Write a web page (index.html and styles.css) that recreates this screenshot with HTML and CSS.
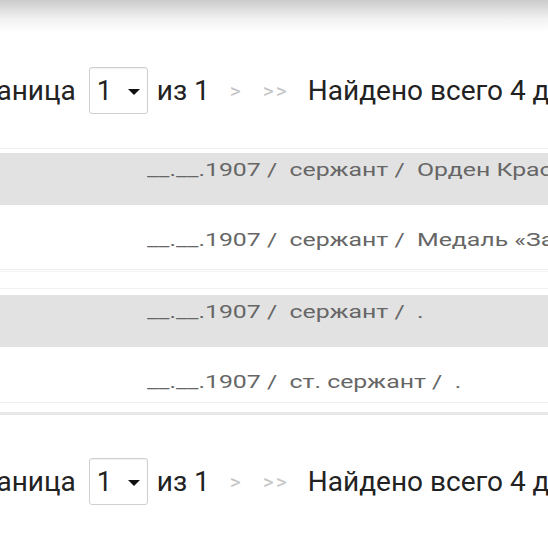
FILE: index.html
```html
<!DOCTYPE html>
<html lang="ru">
<head>
<meta charset="utf-8">
<link rel="stylesheet" href="styles.css">
</head>
<body>
<div class="shade"></div>
<div class="pager pager-top">
  <span class="label">Страница</span>
  <span class="select"><span class="val">1</span><span class="caret"></span></span>
  <span class="of">из 1</span>
  <span class="nav nav-next">&gt;</span>
  <span class="nav nav-last">&gt;&gt;</span>
  <span class="found">Найдено всего 4 документа</span>
</div>
<div class="list">
  <div class="row row-gray row-first"><div class="band"><span class="txt">__.__.1907 /&nbsp; сержант /&nbsp; Орден Красной Звезды</span></div></div>
  <div class="row row-white row-second"><div class="band"><span class="txt">__.__.1907 /&nbsp; сержант /&nbsp; Медаль «За отвагу»</span></div></div>
  <div class="row row-gray row-third"><div class="band"><span class="txt">__.__.1907 /&nbsp; сержант /&nbsp; .</span></div></div>
  <div class="row row-white row-fourth"><div class="band"><span class="txt">__.__.1907 /&nbsp; ст. сержант /&nbsp; .</span></div></div>
</div>
<div class="pager pager-bottom">
  <span class="label">Страница</span>
  <span class="select"><span class="val">1</span><span class="caret"></span></span>
  <span class="of">из 1</span>
  <span class="nav nav-next">&gt;</span>
  <span class="nav nav-last">&gt;&gt;</span>
  <span class="found">Найдено всего 4 документа</span>
</div>
</body>
</html>
```
FILE: styles.css
```css
html, body {
  margin: 0;
  padding: 0;
  background: #fff;
}
body {
  width: 548px;
  height: 548px;
  overflow: hidden;
  font-family: Roboto, "Liberation Sans", sans-serif;
}
.shade {
  height: 32px;
  background: linear-gradient(#cbcbcb, #f2f2f2 60%, #fff);
}
.pager {
  display: flex;
  align-items: center;
  height: 47px;
  white-space: nowrap;
  font-size: 28px;
  color: #222;
}
.label { margin-left: -51px; }
.pager-top { margin-top: 35px; }
.pager-bottom { margin-top: 43px; }
.select {
  box-sizing: border-box;
  display: flex;
  align-items: center;
  justify-content: space-between;
  flex: none;
  width: 59px;
  height: 47px;
  margin: 0 9px 0 13px;
  padding: 0 7px 0 7px;
  border: 1px solid #cfcfcf;
  border-radius: 3px;
  box-shadow: inset 0 1px 1px rgba(0,0,0,0.06);
  font-size: 27px;
}
.caret {
  width: 0;
  height: 0;
  border-left: 6px solid transparent;
  border-right: 6px solid transparent;
  border-top: 6px solid #111;
  margin-top: 2px;
}
.nav {
  color: #c4c4c4;
  font-size: 21px;
}
.nav-next { margin-left: 20px; }
.nav-last { margin-left: 22px; letter-spacing: 2px; }
.found { margin-left: 19px; }
.list {
  margin-top: 34px;
}
.row {
  font-size: 18px;
  color: #666;
  white-space: nowrap;
}
.band {
  padding-left: 147px;
  box-sizing: border-box;
}
.txt {
  display: inline-block;
  transform: scaleX(1.38);
  transform-origin: 0 50%;
}
.row-first {
  border-top: 1px solid #f1f1f1;
  padding-top: 4px;
}
.row-gray .band {
  background: #e2e2e2;
  height: 52px;
  padding-top: 6px;
  line-height: 22px;
}
.row-white .band {
  line-height: 22px;
}
.row-second .band {
  height: 65px;
  padding-top: 24px;
  border-bottom: 1px solid #ececec;
}
.row-second {
  border-bottom: 1px solid #f3f3f3;
  padding-bottom: 1px;
}
.row-third {
  margin-top: 16px;
  border-top: 1px solid #f1f1f1;
  padding-top: 6px;
}
.row-fourth .band {
  height: 56px;
  padding-top: 24px;
  border-bottom: 1px solid #efefef;
}
.row-fourth {
  padding-bottom: 9px;
  border-bottom: 3px solid #e8e8e8;
}
```
